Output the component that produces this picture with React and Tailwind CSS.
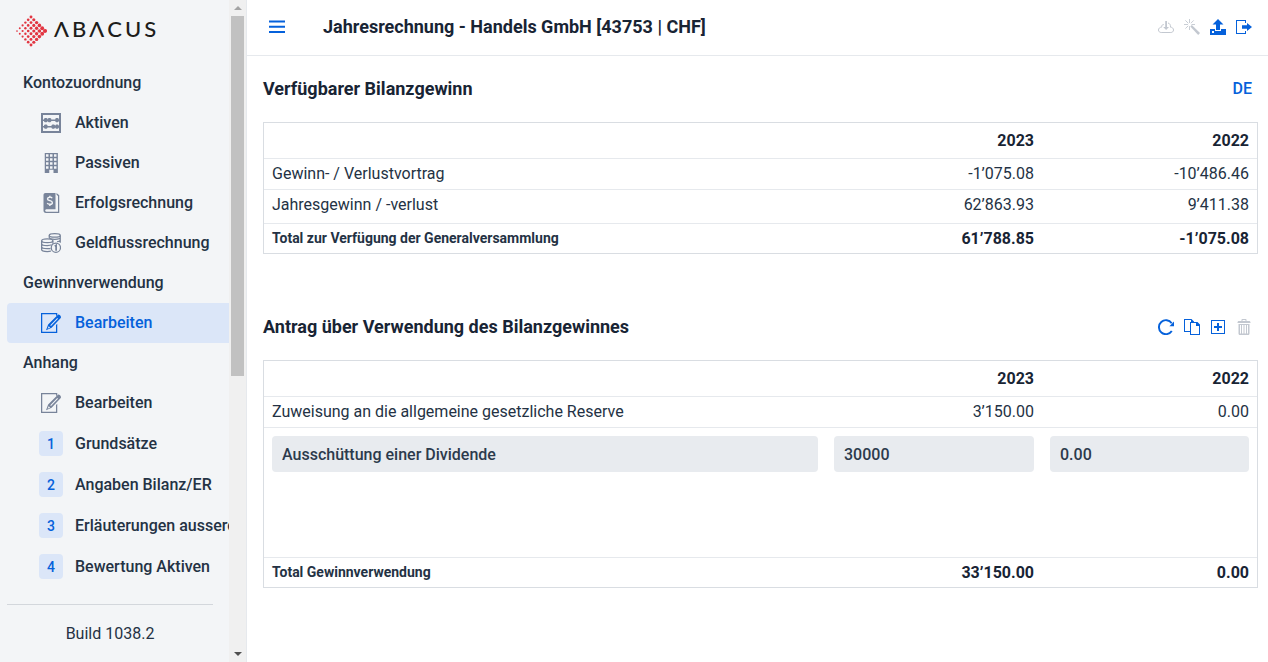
import { useState } from 'react';

const ICONS = {
  abacus: (
    <>
      <path fillRule="evenodd" d="M0 0h16v16H0zM1.6 1.6v12.8h12.8V1.6z" />
      <path d="M1 5.1h14v1.2H1zM1 10.3h14v1.2H1z" />
      <path d="M2.4 4.600l.8-.6h1.200l.8.600v2.200l-.8.600H3.200l-.8-.600zM5.400 4.600l.8-.6h1.200l.8.600v2.200l-.8.600H6.200l-.8-.600zM11.400 4.600l.8-.6h1.200l.8.600v2.200l-.8.600h-1.200l-.8-.600zM2.400 9.800l.8-.6h1.200l.8.600v2.200l-.8.600H3.200l-.8-.600zM8.400 9.800l.8-.6h1.200l.8.600v2.200l-.8.600H9.200l-.8-.600zM11.400 9.800l.8-.6h1.200l.8.600v2.200l-.8.600h-1.200l-.8-.600z" />
    </>
  ),
  building: (
    <path fillRule="evenodd" d="M3 0h10.5v16H10v-2.6H6.6V16H3zM4 1v2h2V1zM7.2 1v2h2V1zM10.4 1v2h2V1zM4 4.2v2h2v-2zM7.2 4.2v2h2v-2zM10.4 4.2v2h2v-2zM4 7.4v2h2v-2zM7.2 7.4v2h2v-2zM10.4 7.4v2h2v-2zM4 10.6v2h2v-2zM7.2 10.6v2h2v-2zM10.4 10.6v2h2v-2z" />
  ),
  bookDollar: (
    <>
      <path d="M3.6 0H11.600v13H4.2c-1.2 0-1.2 2 0 2h9.400V2.300L12.400 1.400V0l2.200 1.700V16H4c-1.4 0-2-.9-2-2V1.6C2 .6 2.6 0 3.6 0z" />
      <path d="M8.900 4.2C8.4 3 5.200 3 5.200 4.700c0 1.8 3.900 1.1 3.900 3 0 1.700-3.400 1.700-4.100.3M7.100 2.100v1.300M7.100 9v1.300" fill="none" stroke="#f3f5f7" strokeWidth="1.1" />
    </>
  ),
  coins: (
    <g fill="none" stroke="currentColor" strokeWidth="1">
      <ellipse cx="11" cy="1.9" rx="4.4" ry="1.4" />
      <path d="M6.6 2v1.6c0 .8 1.8 1.4 4.4 1.4s4.4-.6 4.4-1.4V2M15.4 3.6v2c0 .7-1 1.2-2.6 1.4M15.4 5.6v2.2" />
      <ellipse cx="5" cy="6.2" rx="4.5" ry="1.5" />
      <path d="M.5 6.2v7c0 .9 2 1.6 4.5 1.6 1.2 0 2.2-.1 3-.4M.5 8.5c0 .9 2 1.5 4.5 1.5 1.500 0 2.8-.2 3.6-.6M.5 10.9c0 .9 2 1.5 4.5 1.5h2.6M9.5 6.2v2.4" />
      <circle cx="11.9" cy="11.7" r="3.7" />
      <path d="M11 10.6l1.1-.7v4.2" strokeWidth="1.4" />
    </g>
  ),
  edit: (
    <>
      <path d="M0 0h13v1.500l-1 1V1H1v14h11V9.500l1-1V16H0z" />
      <path fillRule="evenodd" d="M13.300 1.500c1-.9 3.400 1.200 2.500 2.400L8.500 11.800 4 13.800l1.700-4.600zM13 4L7.400 9.700l.6.600 5.600-5.700zM6.100 10.500l-.8 2 2.100-.900z" />
    </>
  ),
  cloud: (
    <>
      <path fill="none" stroke="currentColor" d="M6 5.6H5.4c-.9 0-1.7.7-1.7 1.7v.8C1.900 8.200.5 9.300.5 11c0 1.600 1.200 2.500 2.700 2.500h9.600c1.500 0 2.700-.9 2.700-2.500 0-1.700-1.300-2.800-3-2.800.2-2.300-.8-3.900-2.500-4.200" />
      <path d="M7.200 2h1.800v6h2l-2.900 3L5.200 8h2z" />
    </>
  ),
  magic: (
    <>
      <path d="M6.300 7.400l1.500-1.300 8.200 8-1.800 1.900z" />
      <path fill="none" stroke="currentColor" strokeWidth="0.9" d="M5.500 0v4M0 5.500h4M1.400 1.400l2.900 2.900M9.700 1.400L6.900 4.200M7.500 5.500H11M1.400 9.600l2.800-2.800M5.500 7.200V11" />
    </>
  ),
  upload: <path fillRule="evenodd" d="M11 10v2H5v-2H0v6h16v-6zM4 14H2v-2h2zM13.500 5.500L8 0 2.500 5.500H6V11h4V5.500z" />,
  signOut: <path d="M9 4V2H1v12h8v-2h1v3H0V1h10v3zM16 8l-5-4v2.200H6v3.600h5V12z" />,
  refresh: (
    <>
      <path fill="none" stroke="currentColor" strokeWidth="1.900" d="M13.700 4.200A7 7 0 1 0 13.800 12" />
      <path d="M16 2.600v4.600h-4.600z" />
    </>
  ),
  copy: <path fillRule="evenodd" d="M0 0h7.500L10 2.500V3h3.500L16 5.500V16H6v-3H0zM1 1v11h5V3h3L7 3V1zM7 4v11h8V7h-3V4z" />,
  plus: <path fillRule="evenodd" d="M1 1h14v14H1zM2 2v12h12V2zM7 4h2v3h3v2H9v3H7V9H4V7h3z" />,
  trash: (
    <path fillRule="evenodd" d="M10.500 2V.800C10.500.300 10.200 0 9.800 0H6.200c-.4 0-.7.300-.7.800V2H3c-1 0-1.500.600-1.500 1.500V4h13v-.5C14.500 2.600 14 2 13 2zM6.500 1h3v1h-3zM2.500 5v9.500c0 .8.5 1.500 1.300 1.500h8.400c.8 0 1.300-.7 1.300-1.500V5zM4 6h1v8.500H4zM6 6h1.500v8.500H6zM8.500 6H10v8.500H8.500zM11 6h1v8.500h-1z" />
  ),
};

const Icon = ({ name, className = 'size-4' }) => (
  <svg viewBox="0 0 16 16" fill="currentColor" aria-hidden="true" className={`shrink-0 ${className}`}>
    {ICONS[name]}
  </svg>
);

const NAV = [
  {
    titel: 'Kontozuordnung',
    items: [
      { id: 'aktiven', label: 'Aktiven', icon: 'abacus' },
      { id: 'passiven', label: 'Passiven', icon: 'building' },
      { id: 'erfolg', label: 'Erfolgsrechnung', icon: 'bookDollar' },
      { id: 'geldfluss', label: 'Geldflussrechnung', icon: 'coins' },
    ],
  },
  { titel: 'Gewinnverwendung', items: [{ id: 'gewinn', label: 'Bearbeiten', icon: 'edit' }] },
  {
    titel: 'Anhang',
    items: [
      { id: 'anhang', label: 'Bearbeiten', icon: 'edit' },
      { id: 'a1', label: 'Grundsätze', nr: 1 },
      { id: 'a2', label: 'Angaben Bilanz/ER', nr: 2 },
      { id: 'a3', label: 'Erläuterungen ausserordentlich', nr: 3 },
      { id: 'a4', label: 'Bewertung Aktiven', nr: 4 },
    ],
  },
];

// Punkte der Raute, nach rechts grösser werdend
const PUNKTE = Array.from({ length: 36 }, (_, n) => {
  const i = n % 6;
  const j = Math.floor(n / 6);
  return { x: 16 + (i - j) * 2.8, y: 16 + (i + j - 5) * 2.8, r: 1.45 + (i - j) * 0.12 };
});

const Logo = () => (
  <div className="flex h-[63px] items-center gap-[7px] pb-[2px] pl-[15px]" role="img" aria-label="Abacus">
    <svg viewBox="0 0 32 32" className="size-8 shrink-0 text-[#e23642]" fill="currentColor">
      {PUNKTE.map((p, n) => <circle key={n} cx={p.x} cy={p.y} r={p.r} />)}
    </svg>
    <div className="flex gap-[3px] pb-[3px] font-['Lato',sans-serif] text-[22px] leading-6 font-medium text-[#1d1d1b]">
      {[...'ΛBΛCUS'].map((b, n) => <span key={n}>{b}</span>)}
    </div>
  </div>
);

const Sidebar = () => {
  const [aktiv, setAktiv] = useState('gewinn');

  return (
    <aside className="flex w-[247px] shrink-0 border-r border-[#e6e9ed] bg-[#f3f5f7]">
      <div className="flex-1 min-w-0 overflow-hidden">
        <Logo />
        <nav className="pl-[7px]">
          {NAV.map(gruppe => (
            <div key={gruppe.titel}>
              <h3 className="flex h-10 items-center pl-4 font-medium">{gruppe.titel}</h3>
              {gruppe.items.map(item => (
                <a
                  key={item.id}
                  href={`#${item.id}`}
                  onClick={() => setAktiv(item.id)}
                  className={`flex items-center gap-3 rounded-l pl-8 font-medium whitespace-nowrap ${item.nr ? 'h-[41px]' : 'h-10'} ${
                    aktiv === item.id ? 'bg-[#dbe6f8] text-[#0561db]' : ''
                  }`}
                >
                  {item.nr ? (
                    <span className="flex h-[25px] w-6 shrink-0 items-center justify-center rounded bg-[#dbe6f8] text-sm text-[#0561db]">
                      {item.nr}
                    </span>
                  ) : (
                    <span className={`flex w-6 shrink-0 justify-center ${aktiv === item.id ? '' : 'text-[#78849a]'}`}>
                      <Icon name={item.icon} className="size-5" />
                    </span>
                  )}
                  {item.label}
                </a>
              ))}
            </div>
          ))}
        </nav>
        <div className="mt-[17px] mr-4 ml-[7px] border-t border-[#d3d7dc] pt-[17px] text-center">Build 1038.2</div>
      </div>

      {/* Bildlaufleiste */}
      <div className="flex w-[17px] shrink-0 flex-col items-center bg-[#f0f0f0]">
        <span className="flex h-4 items-center">
          <span className="border-x-4 border-b-4 border-x-transparent border-b-[#a3a3a3]"></span>
        </span>
        <span className="h-[360px] w-[13px] bg-[#c1c1c1]"></span>
        <span className="mt-auto flex h-4 items-center">
          <span className="border-x-4 border-t-4 border-x-transparent border-t-[#505050]"></span>
        </span>
      </div>
    </aside>
  );
};

const IconButton = ({ icon, label, disabled }) => (
  <button type="button" aria-label={label} disabled={disabled} className="text-[#0561db] cursor-pointer disabled:cursor-default disabled:text-[#c3c8d0]">
    <Icon name={icon} />
  </button>
);

const Tabelle = ({ zeilen, total, children }) => (
  <div className="border border-[#d9dde2]">
    <table className="w-full table-fixed border-separate border-spacing-0">
      <thead>
        <tr className="h-9 text-right font-bold text-[#182434]">
          <td className="border-b border-[#e6e9ed] px-2"></td>
          <th scope="col" className="w-[216px] border-b border-[#e6e9ed] px-2 text-right">2023</th>
          <th scope="col" className="w-[215px] border-b border-[#e6e9ed] px-2 text-right">2022</th>
        </tr>
      </thead>
      <tbody>
        {zeilen.map((z, n) => {
          const rand = children || n < zeilen.length - 1 ? 'h-[31px] border-b border-[#e6e9ed]' : 'h-[33px] pb-1';
          return (
            <tr key={z[0]}>
              <td className={`px-2 ${rand}`}>{z[0]}</td>
              <td className={`px-2 text-right ${rand}`}>{z[1]}</td>
              <td className={`px-2 text-right ${rand}`}>{z[2]}</td>
            </tr>
          );
        })}
        {children}
      </tbody>
      <tfoot>
        <tr className="h-[30px] font-bold text-[#182434]">
          <td className="border-t border-[#e6e9ed] px-2 pb-[2px] text-sm text-[#243244]">{total[0]}</td>
          <td className="border-t border-[#e6e9ed] px-2 text-right">{total[1]}</td>
          <td className="border-t border-[#e6e9ed] px-2 text-right">{total[2]}</td>
        </tr>
      </tfoot>
    </table>
  </div>
);

const Feld = ({ label, wert }) => (
  <td className="h-[129px] p-2 align-top">
    <input
      type="text"
      aria-label={label}
      defaultValue={wert}
      className="block h-9 w-full rounded bg-[#e8ebef] px-[10px] font-medium text-[#2c3a4c] outline-none"
    />
  </td>
);

const App = () => (
  <div className="flex min-h-screen bg-white font-['Roboto',sans-serif] text-base text-[#243244]">
    <Sidebar />

    <main className="flex-1 min-w-0">
      <header className="flex h-14 items-center border-b border-[#e6e9ed] pr-4 pb-[2px] pl-[22px]">
        <button type="button" aria-label="Menü" className="cursor-pointer text-[#0561db]">
          <svg viewBox="0 0 16 16" fill="currentColor" className="size-4">
            <path d="M0 1.500h16v2H0zM0 6.700h16v2H0zM0 11.900h16v2H0z" />
          </svg>
        </button>
        <h1 className="ml-[38px] text-lg font-bold text-[#182434]">Jahresrechnung - Handels GmbH [43753 | CHF]</h1>
        <div className="ml-auto flex gap-[10px]">
          <IconButton icon="cloud" label="Herunterladen" disabled />
          <IconButton icon="magic" label="Assistent" disabled />
          <IconButton icon="upload" label="Hochladen" />
          <IconButton icon="signOut" label="Abmelden" />
        </div>
      </header>

      <section className="pr-[10px] pl-4">
        <div className="flex h-[66px] items-center justify-between pr-[6px]">
          <h2 className="text-lg font-bold text-[#182434]">Verfügbarer Bilanzgewinn</h2>
          <button type="button" className="cursor-pointer font-medium text-[#0561db]">DE</button>
        </div>
        <Tabelle
          zeilen={[
            ['Gewinn- / Verlustvortrag', '-1’075.08', '-10’486.46'],
            ['Jahresgewinn / -verlust', '62’863.93', '9’411.38'],
          ]}
          total={['Total zur Verfügung der Generalversammlung', '61’788.85', '-1’075.08']}
        />
      </section>

      <section className="mt-10 pr-[10px] pl-4">
        <div className="flex h-[66px] items-center justify-between pr-[6px]">
          <h2 className="text-lg font-bold text-[#182434]">Antrag über Verwendung des Bilanzgewinnes</h2>
          <div className="flex gap-[10px]">
            <IconButton icon="refresh" label="Aktualisieren" />
            <IconButton icon="copy" label="Kopieren" />
            <IconButton icon="plus" label="Hinzufügen" />
            <IconButton icon="trash" label="Löschen" disabled />
          </div>
        </div>
        <Tabelle
          zeilen={[['Zuweisung an die allgemeine gesetzliche Reserve', '3’150.00', '0.00']]}
          total={['Total Gewinnverwendung', '33’150.00', '0.00']}
        >
          <tr>
            <Feld label="Bezeichnung" wert="Ausschüttung einer Dividende" />
            <Feld label="Betrag 2023" wert="30000" />
            <Feld label="Betrag 2022" wert="0.00" />
          </tr>
        </Tabelle>
      </section>
    </main>
  </div>
);

export default App;
